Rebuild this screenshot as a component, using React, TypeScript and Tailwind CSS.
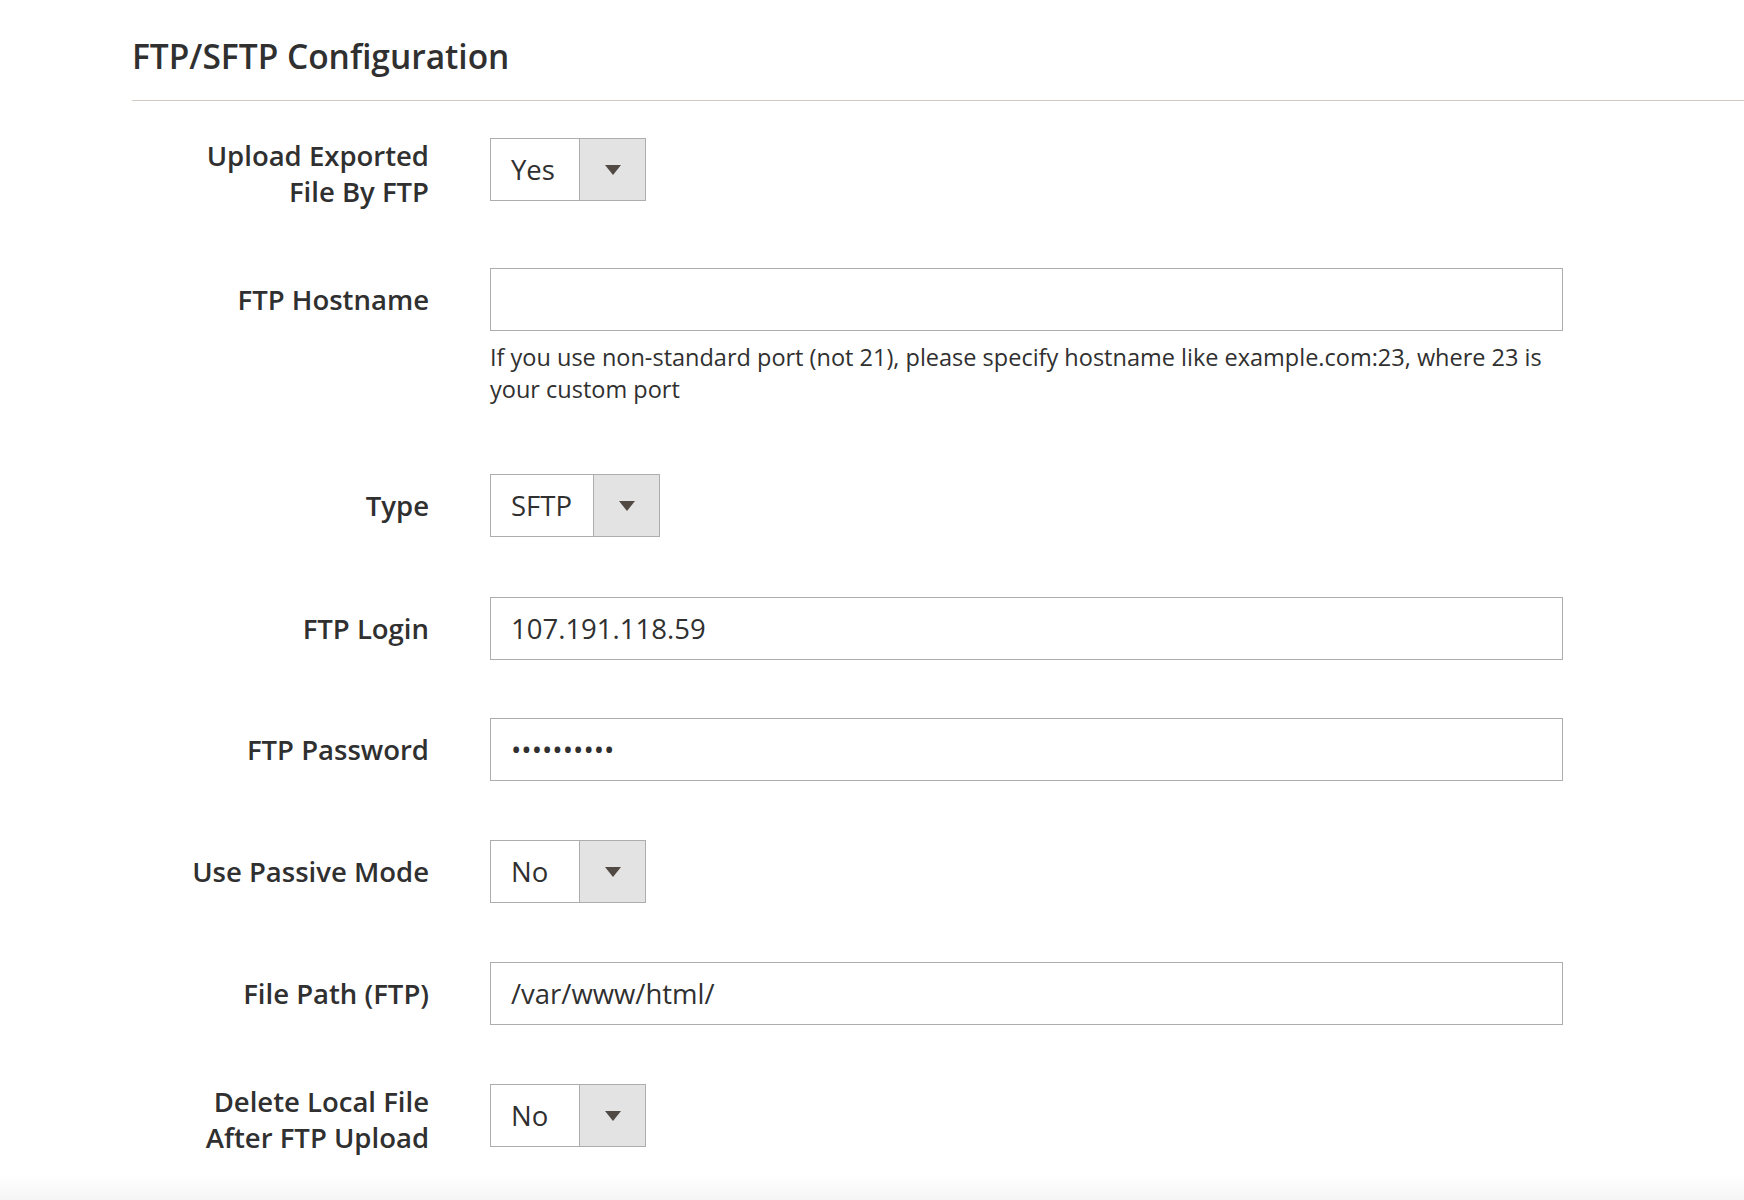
import React from 'react';

const font = { fontFamily: '"Open Sans", "Noto Sans", Arial, sans-serif' };

const Arrow = () => (
    <svg width="16" height="10" viewBox="0 0 16 10" className="block">
        <polygon points="0,0 16,0 8,10" fill="#514943" />
    </svg>
);

interface SelectProps {
    value: string;
    width: string;
}

const FakeSelect: React.FC<SelectProps> = ({ value, width }) => (
    <div className="flex h-[63px] border border-[#adadad] bg-white">
        <div className={`${width} flex items-center pl-[20px] text-[27.5px] text-[#303030]`}>{value}</div>
        <div className="w-[66px] flex items-center justify-center border-l border-[#adadad] bg-[#e3e3e3]">
            <Arrow />
        </div>
    </div>
);

interface RowProps {
    label: React.ReactNode;
    multiline?: boolean;
    className?: string;
    children: React.ReactNode;
}

const Row: React.FC<RowProps> = ({ label, multiline = false, className = '', children }) => (
    <div className={`flex ${className}`}>
        <div className={`w-[297px] shrink-0 flex justify-end ${multiline ? 'items-start' : 'items-center h-[63px]'}`}>
            <label className="max-w-[262px] text-right text-[27.5px] leading-[36px] font-semibold text-[#303030]">
                {label}
            </label>
        </div>
        <div className="ml-[61px] w-[1073px]">{children}</div>
    </div>
);

const inputCls =
    'block w-full h-[63px] border border-[#adadad] bg-white px-[20px] text-[27.5px] text-[#303030] outline-none';

export default function App() {
    return (
        <div className="min-h-[1200px] flex flex-col bg-white" style={font}>
            <div className="flex-1 pl-[132px]">
                {/* Section title */}
                <div className="pt-[36px] pb-[24px] border-b border-[#d1cbc1]">
                    <h2 className="text-[33.5px] leading-[40px] font-semibold text-[#303030]">FTP/SFTP Configuration</h2>
                </div>

                <div className="pt-[37px]">
                    <Row label="Upload Exported File By FTP" multiline className="mb-[58px]">
                        <div className="inline-block">
                            <FakeSelect value="Yes" width="w-[88px]" />
                        </div>
                    </Row>

                    <Row label="FTP Hostname" className="mb-[69px]">
                        <input className={inputCls} type="text" defaultValue="" readOnly />
                        <p className="mt-[10px] text-[23.5px] leading-[32px] text-[#303030]">
                            If you use non-standard port (not 21), please specify hostname like example.com:23, where 23 is your custom port
                        </p>
                    </Row>

                    <Row label="Type" className="mb-[60px]">
                        <div className="inline-block">
                            <FakeSelect value="SFTP" width="w-[102px]" />
                        </div>
                    </Row>

                    <Row label="FTP Login" className="mb-[58px]">
                        <input className={inputCls} type="text" defaultValue="107.191.118.59" readOnly />
                    </Row>

                    <Row label="FTP Password" className="mb-[59px]">
                        <input className={inputCls} type="password" defaultValue="abcdefghij" readOnly />
                    </Row>

                    <Row label="Use Passive Mode" className="mb-[59px]">
                        <div className="inline-block">
                            <FakeSelect value="No" width="w-[88px]" />
                        </div>
                    </Row>

                    <Row label="File Path (FTP)" className="mb-[59px]">
                        <input className={inputCls} type="text" defaultValue="/var/www/html/" readOnly />
                    </Row>

                    <Row label="Delete Local File After FTP Upload" multiline>
                        <div className="inline-block">
                            <FakeSelect value="No" width="w-[88px]" />
                        </div>
                    </Row>
                </div>
            </div>

            {/* page footer edge */}
            <div className="h-[25px] bg-gradient-to-b from-white to-[#f5f5f5]" />
        </div>
    );
}
